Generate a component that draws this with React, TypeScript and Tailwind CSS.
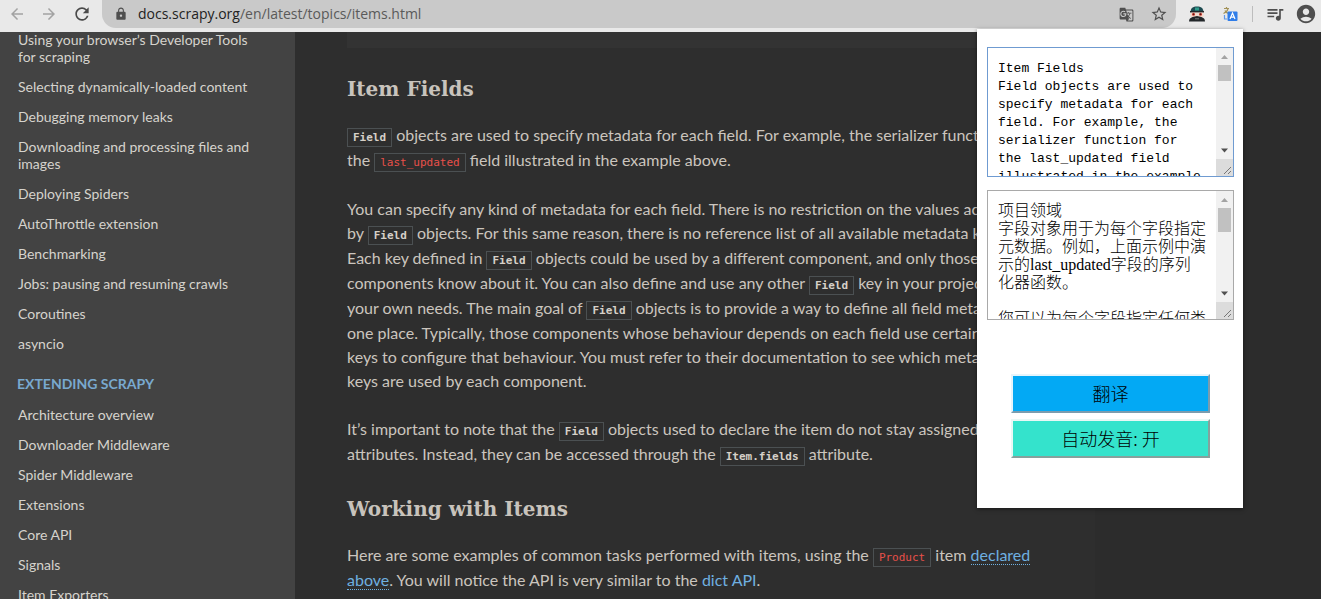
import type { ReactNode } from 'react';
import {
  MdAccountCircle,
  MdArrowBack,
  MdArrowForward,
  MdGTranslate,
  MdLock,
  MdQueueMusic,
  MdRefresh,
  MdStarBorder,
} from 'react-icons/md';

const SOURCE_TEXT =
  'Item Fields\nField objects are used to specify metadata for each field. For example, the serializer function for the last_updated field illustrated in the example above.';

const RESULT_TEXT =
  '项目领域\n字段对象用于为每个字段指定元数据。例如，上面示例中演示的last_updated字段的序列化器函数。\n\n您可以为每个字段指定任何类型的元数据。';

const SOLVING_LINKS = [
  'Using your browser’s Developer Tools for scraping',
  'Selecting dynamically-loaded content',
  'Debugging memory leaks',
  'Downloading and processing files and images',
  'Deploying Spiders',
  'AutoThrottle extension',
  'Benchmarking',
  'Jobs: pausing and resuming crawls',
  'Coroutines',
  'asyncio',
];

const EXTENDING_LINKS = [
  'Architecture overview',
  'Downloader Middleware',
  'Spider Middleware',
  'Extensions',
  'Core API',
  'Signals',
  'Item Exporters',
];

function MaskedManIcon() {
  return (
    <svg viewBox="0 0 18 18" className="h-[18px] w-[18px]" aria-hidden="true">
      <path d="M2.500 7.500C2.500 3 5 1.500 9 1.500s6.500 1.500 6.500 6z" fill="#1d4a50" />
      <path d="M7 2.500h4v3H7z" fill="#2f9c8c" />
      <path d="M2.500 6.500h13v5.500h-13z" fill="#f3d9cd" />
      <path d="M2 6h14v1.400H2z" fill="#22282c" />
      <circle cx="5.500" cy="9.200" r="1.500" fill="#c9372c" />
      <circle cx="12.500" cy="9.200" r="1.500" fill="#c9372c" />
      <circle cx="5.500" cy="9.200" r=".6" fill="#2a1a1a" />
      <circle cx="12.500" cy="9.200" r=".6" fill="#2a1a1a" />
      <path d="M1 16.500c0-2.500 1.500-3.800 3.500-4.500L9 11l4.500 1c2 .7 3.500 2 3.500 4.500z" fill="#23272a" />
      <path d="M7 13.800h4" stroke="#8a8f92" strokeWidth=".8" />
    </svg>
  );
}

function TranslateExtensionIcon() {
  return (
    <svg viewBox="0 0 16 16" className="h-4 w-4" aria-hidden="true">
      <path d="M2 2.500h5M4.500 1v1.500M6 3C5.500 5 3.500 6.500 1.500 7.500M3 4.500c.5 1.500 2 2.500 3.500 3" stroke="#a3935a" strokeWidth="1.200" fill="none" />
      <path d="M2.500 9v4H5" stroke="#5d97e8" strokeWidth="1.200" fill="none" />
      <rect x="5.500" y="5.500" width="10" height="9.500" rx="1" fill="#2f7de9" />
      <path d="M8 13l2.500-6 2.500 6M8.900 11.200h3.200" stroke="#fff" strokeWidth="1.200" fill="none" />
    </svg>
  );
}

function Toolbar() {
  return (
    <header className="flex h-8 shrink-0 items-start bg-[#e9e9e9] pr-1">
      <div className="flex h-7 items-center gap-3.5 pl-2 text-[#a3a3a3]">
        <button type="button" aria-label="Back">
          <MdArrowBack size={18} />
        </button>
        <button type="button" aria-label="Forward">
          <MdArrowForward size={18} />
        </button>
        <button type="button" aria-label="Reload" className="text-[#4a4a4a]">
          <MdRefresh size={20} />
        </button>
      </div>
      <div className="ml-2.5 flex h-7 flex-1 items-center rounded-b-[14px] bg-[#c9c9c9] pr-2 pl-3 text-[#4f4f4f]">
        <MdLock size={14} />
        <a
          href="#items"
          className="ml-2.5 flex-1 font-['Open_Sans',sans-serif] text-sm leading-5 text-[#5a5a5a]"
        >
          <span className="text-[#222]">docs.scrapy.org</span>/en/latest/topics/items.html
        </a>
        <div className="flex items-center gap-4">
          <button type="button" aria-label="Translate this page">
            <MdGTranslate size={15} />
          </button>
          <button type="button" aria-label="Bookmark this page">
            <MdStarBorder size={18} />
          </button>
        </div>
      </div>
      <div className="flex h-7 items-center pl-3 text-[#4f4f4f]">
        <button type="button" aria-label="Masked man extension">
          <MaskedManIcon />
        </button>
        <button type="button" aria-label="Translator extension" className="ml-4">
          <TranslateExtensionIcon />
        </button>
        <span className="ml-3.5 h-4 w-px bg-[#bdbdbd]" />
        <button type="button" aria-label="Media controls" className="ml-3">
          <MdQueueMusic size={20} />
        </button>
        <button type="button" aria-label="Profile" className="ml-2.5">
          <MdAccountCircle size={22} />
        </button>
      </div>
    </header>
  );
}

function NavLinks({ items }: { items: string[] }) {
  return (
    <ul>
      {items.map((item) => (
        <li key={item}>
          <a href="#nav" className="block pt-1.5 pr-8 pb-[7px] pl-[18px]">
            {item}
          </a>
        </li>
      ))}
    </ul>
  );
}

function Sidebar() {
  return (
    <nav className="w-[295px] shrink-0 overflow-hidden bg-[#434343] text-sm leading-[17px] text-[#d6d3cd]">
      <div className="-mt-[7px]">
        <NavLinks items={SOLVING_LINKS} />
        <p className="mt-3 mb-1 py-1 pl-[17px] font-bold text-[#79a9cf] uppercase">Extending Scrapy</p>
        <NavLinks items={EXTENDING_LINKS} />
      </div>
    </nav>
  );
}

function Code({ children, literal = false }: { children: ReactNode; literal?: boolean }) {
  return (
    <code
      className={
        literal
          ? "border border-[#4b5052] px-[5px] py-0.5 font-['DejaVu_Sans_Mono',monospace] text-[11px] leading-5 text-[#e8504a]"
          : "border border-[#4b5052] px-[5px] py-0.5 font-['DejaVu_Sans_Mono',monospace] text-[11px] leading-5 font-bold text-[#d6d0c8]"
      }
    >
      {children}
    </code>
  );
}

function Heading({ children }: { children: ReactNode }) {
  return (
    <h2 className="mb-[18px] pt-0.5 font-['Roboto_Slab','DejaVu_Serif',serif] text-xl leading-8 font-bold text-[#c8c3bc]">
      {children}
    </h2>
  );
}

function Article() {
  return (
    <main className="min-w-0 flex-1 overflow-hidden bg-[#2c2c2c]">
      <div className="min-h-full max-w-[800px] bg-[#2e2e2e] px-[52px] text-base leading-6 text-[#cbc5be]">
        <div className="mb-[23px] h-4 bg-[#333333]" />
        <Heading>Item Fields</Heading>
        <p className="mb-6">
          <Code>Field</Code> objects are used to specify metadata for each field. For example, the serializer
          function for the <Code literal>last_updated</Code> field illustrated in the example above.
        </p>
        <p className="mb-6">
          You can specify any kind of metadata for each field. There is no restriction on the values accepted
          by <Code>Field</Code> objects. For this same reason, there is no reference list of all available
          metadata keys. Each key defined in <Code>Field</Code> objects could be used by a different
          component, and only those components know about it. You can also define and use any
          other <Code>Field</Code> key in your project too, for your own needs. The main goal
          of <Code>Field</Code> objects is to provide a way to define all field metadata in one place.
          Typically, those components whose behaviour depends on each field use certain field keys to
          configure that behaviour. You must refer to their documentation to see which metadata keys are used
          by each component.
        </p>
        <p className="mb-6">
          It’s important to note that the <Code>Field</Code> objects used to declare the item do not stay
          assigned as class attributes. Instead, they can be accessed through
          the <Code>Item.fields</Code> attribute.
        </p>
        <Heading>Working with Items</Heading>
        <p>
          Here are some examples of common tasks performed with items, using
          the <Code literal>Product</Code> item{' '}
          <a href="#declaring" className="border-b border-dotted border-[#6fb0e0] text-[#6fb0e0]">
            declared above
          </a>
          . You will notice the API is very similar to the{' '}
          <a href="#dict" className="text-[#6fb0e0]">
            dict API
          </a>
          .
        </p>
      </div>
    </main>
  );
}

function Scrollbar({ tall = false }: { tall?: boolean }) {
  return (
    <div className="flex w-[17px] shrink-0 flex-col items-center bg-[#f1f1f1]" aria-hidden="true">
      <svg viewBox="0 0 17 17" className="h-[17px] w-[17px]">
        <path d="M5 11h7L8.500 7z" fill="#a3a3a3" />
      </svg>
      <div className={tall ? 'h-6 w-[13px] bg-[#c1c1c1]' : 'h-4 w-[13px] bg-[#c1c1c1]'} />
      <div className="flex-1" />
      <svg viewBox="0 0 17 17" className="h-[17px] w-[17px]">
        <path d="M5 6.500h7l-3.500 4z" fill="#505050" />
      </svg>
      <svg viewBox="0 0 17 17" className="h-[17px] w-[17px] bg-[#dcdcdc]">
        <path d="M8 15l7-7M12 15l3-3" stroke="#777" fill="none" />
      </svg>
    </div>
  );
}

function TranslatorPopup() {
  return (
    <aside className="absolute top-[29px] right-[78px] flex w-[266px] flex-col bg-white pt-[18px] pr-[9px] pb-[50px] pl-2.5 text-black shadow-[0_1px_4px_rgba(0,0,0,0.5)]">
      <div className="flex h-[130px] border border-[#6f9bd1]">
        <textarea
          aria-label="Source text"
          defaultValue={SOURCE_TEXT}
          className="min-w-0 flex-1 resize-none overflow-hidden px-2.5 pt-3 font-['Liberation_Mono',monospace] text-[13px] leading-[18px] outline-none"
        />
        <Scrollbar />
      </div>
      <div className="mt-[13px] flex h-[130px] border border-[#a9a9a9]">
        <textarea
          aria-label="Translation"
          defaultValue={RESULT_TEXT}
          className="min-w-0 flex-1 resize-none overflow-hidden px-2.5 pt-[11px] font-['Liberation_Serif','Noto_Sans_CJK_SC',sans-serif] text-base leading-[18px] font-light outline-none"
        />
        <Scrollbar tall />
      </div>
      <div className="mt-[54px] flex flex-col gap-1.5 px-6 font-['Noto_Sans_CJK_SC',sans-serif] text-lg leading-6 font-light">
        <button
          type="button"
          className="h-[39px] border-2 border-t-[#e6f4fb] border-r-[#7b9cae] border-b-[#7b9cae] border-l-[#e6f4fb] bg-[#03a9f4] pb-0.5"
        >
          翻译
        </button>
        <button
          type="button"
          className="h-[39px] border-2 border-t-[#e9f8f5] border-r-[#86a19d] border-b-[#86a19d] border-l-[#e9f8f5] bg-[#34e3cc] pb-0.5"
        >
          自动发音: 开
        </button>
      </div>
    </aside>
  );
}

export default function App() {
  return (
    <div className="relative flex h-screen flex-col overflow-hidden bg-[#2c2c2c] font-['Lato',sans-serif]">
      <Toolbar />
      <div className="flex min-h-0 flex-1">
        <Sidebar />
        <Article />
      </div>
      <TranslatorPopup />
    </div>
  );
}
